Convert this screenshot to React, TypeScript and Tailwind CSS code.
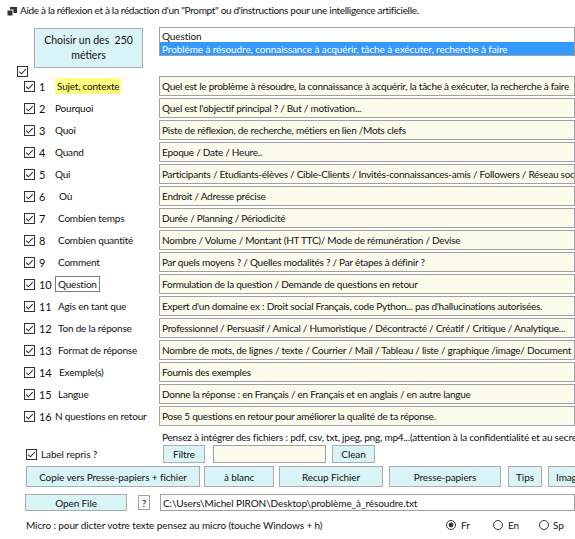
import React from "react";

const Check = ({ className = "" }: { className?: string }) => (
  <svg width="11" height="11" viewBox="0 0 11 11" className={className}>
    <rect x="0.5" y="0.5" width="10" height="10" fill="#fff" stroke="#333" />
    <path d="M2.2 5.6 L4.4 7.8 L8.8 3.2" fill="none" stroke="#333" strokeWidth="1.1" />
  </svg>
);

const Radio = ({ on }: { on?: boolean }) => (
  <svg width="10" height="10" viewBox="0 0 10 10">
    <circle cx="5" cy="5" r="4.5" fill="#fff" stroke="#333" />
    {on && <circle cx="5" cy="5" r="2.4" fill="#333" />}
  </svg>
);

type Row = { n: number; label: string; text: string; pad: number; kind?: "hl" | "box" };

const rows: Row[] = [
  { n: 1, label: "Sujet, contexte", text: "Quel est le problème à résoudre, la connaissance à acquérir, la tâche à exécuter, la recherche à faire", pad: 0, kind: "hl" },
  { n: 2, label: "Pourquoi", text: "Quel est l'objectif principal ? / But / motivation...", pad: 0 },
  { n: 3, label: "Quoi", text: "Piste de réflexion, de recherche, métiers en lien /Mots clefs", pad: 0 },
  { n: 4, label: "Quand", text: "Epoque / Date / Heure..", pad: 0 },
  { n: 5, label: "Qui", text: "Participants / Etudiants-élèves / Cible-Clients / Invités-connaissances-amis / Followers / Réseau social", pad: 0 },
  { n: 6, label: "Où", text: "Endroit / Adresse précise", pad: 4 },
  { n: 7, label: "Combien temps", text: "Durée / Planning / Périodicité", pad: 3 },
  { n: 8, label: "Combien quantité", text: "Nombre / Volume / Montant (HT TTC)/ Mode de rémunération / Devise", pad: 3 },
  { n: 9, label: "Comment", text: "Par quels moyens ? / Quelles modalités ? / Par étapes à définir ?", pad: 3 },
  { n: 10, label: "Question", text: "Formulation de la question / Demande de questions en retour", pad: 0, kind: "box" },
  { n: 11, label: "Agis en tant que", text: "Expert d'un domaine ex : Droit social Français, code Python... pas d'hallucinations autorisées.", pad: 3 },
  { n: 12, label: "Ton de la réponse", text: "Professionnel / Persuasif / Amical / Humoristique / Décontracté / Créatif / Critique / Analytique...", pad: 3 },
  { n: 13, label: "Format de réponse", text: "Nombre de mots, de lignes / texte / Courrier / Mail / Tableau / liste / graphique /image/ Document", pad: 3 },
  { n: 14, label: "Exemple(s)", text: "Fournis des exemples", pad: 4 },
  { n: 15, label: "Langue", text: "Donne la réponse : en Français / en Français et en anglais / en autre langue", pad: 3 },
  { n: 16, label: "N questions en retour", text: "Pose 5 questions en retour pour améliorer la qualité de ta réponse.", pad: 0 },
];

const Btn = ({ children, className = "" }: { children: React.ReactNode; className?: string }) => (
  <div className={`flex items-center justify-center bg-[#d9f4f7] border border-[#acacac] shrink-0 ${className}`}>{children}</div>
);

export default function App() {
  return (
    <div className="w-[575px] h-[539px] bg-white overflow-hidden text-[10px] tracking-[-0.1px] leading-none text-[#111] font-['Lato',sans-serif]">
      {/* title */}
      <div className="h-[22px] flex items-center pl-[7px] whitespace-nowrap">
        <svg width="10" height="9" viewBox="0 0 10 9" className="mr-[3px]">
          <rect x="3" y="0" width="7" height="6" fill="#333" />
          <rect x="0" y="3" width="6" height="6" fill="#333" stroke="#fff" strokeWidth="1" />
        </svg>
        <span className="tracking-[-0.32px] mt-[-2px]">Aide à la réflexion et à la rédaction d'un "Prompt" ou d'instructions pour une intelligence artificielle.</span>
      </div>
      {/* top */}
      <div className="flex items-start pl-[34px] mt-[5px] h-[41px]">
        <Btn className="w-[109px] h-[40px] mt-[1px] flex-col text-[10.5px] tracking-normal leading-[15px] text-center">
          <span>Choisir un des&nbsp; 250</span>
          <span>métiers</span>
        </Btn>
        <div className="ml-[16px] flex-1 h-[29px] border border-[#a0a0a0] bg-white flex flex-col pt-[1px] whitespace-nowrap overflow-hidden">
          <div className="h-[13px] flex items-center pl-[2px]">Question</div>
          <div className="h-[13px] flex items-center pl-[2px] bg-[#3399ff] text-white">Problème à résoudre, connaissance à acquérir, tâche à exécuter, recherche à faire</div>
        </div>
      </div>
      <div className="pl-[17px] mt-[-2px] h-[11px]">
        <Check />
      </div>
      {/* rows */}
      <div className="mt-[-2px] flex flex-col">
        {rows.map((r) => (
          <div key={r.n} className="h-[22px] flex items-center whitespace-nowrap">
            <div className="w-[24px] shrink-0" />
            <Check className="shrink-0" />
            <span className="w-[20px] shrink-0 pl-[4px] text-[11px]">{r.n}</span>
            <div className="w-[104px] shrink-0 flex items-center tracking-[-0.2px]">
              {r.kind === "hl" ? (
                <span className="bg-[#ffff80] px-[2px] py-[3px]">{r.label}</span>
              ) : r.kind === "box" ? (
                <span className="border border-[#7a7a7a] px-[2px] h-[16px] flex items-center">{r.label}</span>
              ) : (
                <span style={{ paddingLeft: r.pad }}>{r.label}</span>
              )}
            </div>
            <div className="flex-1 h-[20px] border border-[#a0a0a0] bg-[#fbfbeb] flex items-center pl-[2px] overflow-hidden tracking-[-0.25px]">
              {r.text}
            </div>
          </div>
        ))}
      </div>
      <div className="h-[16px] mt-[2px] flex items-center pl-[162px] whitespace-nowrap tracking-[-0.2px]">
        Pensez à intégrer des fichiers : pdf, csv, txt, jpeg, png, mp4...(attention à la confidentialité et au secret)
      </div>
      {/* filtre row */}
      <div className="h-[18px] flex items-center whitespace-nowrap">
        <div className="w-[26px] shrink-0" />
        <Check className="shrink-0" />
        <span className="ml-[4px] w-[122px] shrink-0">Label repris ?</span>
        <Btn className="w-[42px] h-[18px]">Filtre</Btn>
        <div className="ml-[8px] w-[113px] h-[18px] border border-[#a0a0a0] bg-[#fbfbeb] shrink-0" />
        <Btn className="ml-[6px] w-[43px] h-[18px]">Clean</Btn>
      </div>
      {/* buttons */}
      <div className="h-[21px] mt-[3px] flex items-center pl-[26px] whitespace-nowrap">
        <Btn className="w-[174px] h-[21px]">Copie vers Presse-papiers + fichier</Btn>
        <Btn className="ml-[4px] w-[70px] h-[21px]">à blanc</Btn>
        <Btn className="ml-[5px] w-[104px] h-[21px]">Recup Fichier</Btn>
        <Btn className="ml-[6px] w-[112px] h-[21px]">Presse-papiers</Btn>
        <Btn className="ml-[7px] w-[34px] h-[21px]">Tips</Btn>
        <Btn className="ml-[6px] w-[60px] h-[21px] !justify-start pl-[7px]">Images</Btn>
      </div>
      {/* open file */}
      <div className="h-[17px] mt-[7px] flex items-center pl-[25px] whitespace-nowrap">
        <Btn className="w-[102px] h-[17px]">Open File</Btn>
        <div className="ml-[11px] w-[12px] h-[15px] border border-[#a0a0a0] flex items-center justify-center shrink-0">?</div>
        <div className="ml-[10px] flex-1 h-[17px] border border-[#a0a0a0] bg-white flex items-center pl-[2px]">
          C:\Users\Michel PIRON\Desktop\problème_à_résoudre.txt
        </div>
      </div>
      {/* micro */}
      <div className="h-[16px] mt-[6px] flex items-center pl-[26px] whitespace-nowrap">
        <span className="w-[420px] shrink-0">Micro : pour dicter votre texte pensez au micro (touche Windows + h)</span>
        <Radio on />
        <span className="ml-[5px] w-[32px]">Fr</span>
        <Radio />
        <span className="ml-[5px] w-[31px]">En</span>
        <Radio />
        <span className="ml-[4px]">Sp</span>
      </div>
    </div>
  );
}
